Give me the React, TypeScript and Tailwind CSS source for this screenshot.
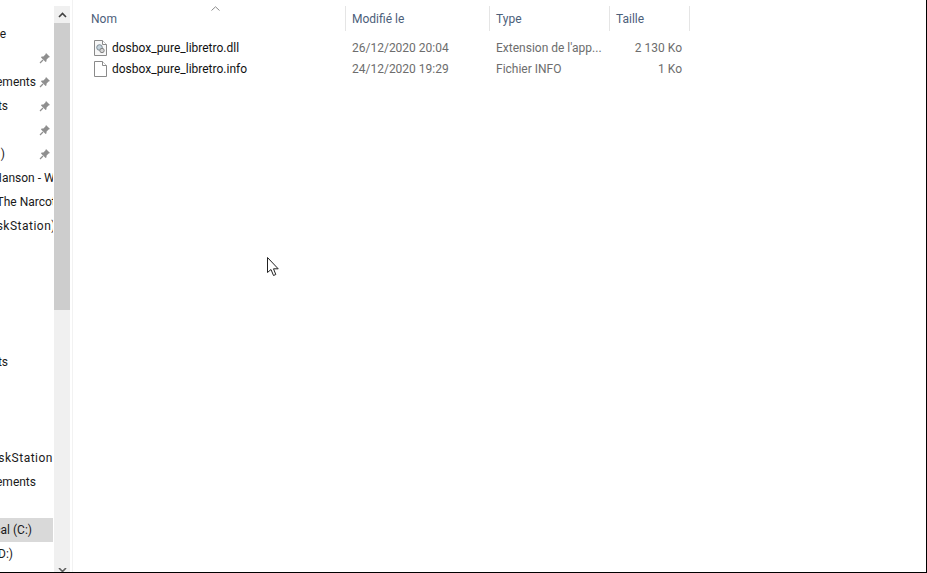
import React from "react";

const font = { fontFamily: 'Roboto,"Noto Sans",sans-serif' };

function Pin() {
  return (
    <svg width="12" height="12" viewBox="0 0 12 12" className="shrink-0">
      <path d="M7 1 L11 5 L9.6 5.6 L7.6 7.6 L7.4 9.6 L6.6 10 L2 5.4 L2.6 4.6 L4.4 4.4 L6.4 2.4 Z" fill="#8f8f8f" />
      <path d="M4 8 L1 11" stroke="#8f8f8f" strokeWidth="1.2" />
    </svg>
  );
}

function NavRow({ text, pin, selected, shift }: { text?: string; pin?: boolean; selected?: boolean; shift?: string }) {
  return (
    <div className={`relative h-6 flex items-center justify-end overflow-hidden whitespace-nowrap text-[12px] text-[#1a1a1a] ${selected ? "bg-[#d9d9d9]" : ""}`}>
      {text ? <span className={`shrink-0 leading-none ${shift ?? ""}`}>{text}</span> : null}
      {pin ? <span className="absolute left-[39px] top-[6px]"><Pin /></span> : null}
    </div>
  );
}

function Row({ icon, name, date, type, size }: { icon: React.ReactNode; name: string; date: string; type: string; size: string }) {
  return (
    <div className="flex h-[21px] items-center pl-[17px]">
      <div className="w-[254px] flex items-center gap-[5px] pl-[3px] text-[#111111]">
        <span className="flex mb-[2px]">{icon}</span>
        <span>{name}</span>
      </div>
      <div className="w-[144px] pl-[7px] text-[#6d6d6d]">{date}</div>
      <div className="w-[120px] pl-[7px] text-[#6d6d6d]">{type}</div>
      <div className="w-[80px] pr-[7px] text-right text-[#6d6d6d]">{size}</div>
    </div>
  );
}

function DllIcon() {
  return (
    <svg width="13" height="16" viewBox="0 0 13 16">
      <path d="M0.5 0.5 H8.5 L12.5 4.5 V15.5 H0.5 Z" fill="#f7f7f7" stroke="#8a8a8a" />
      <path d="M8.5 0.5 V4.5 H12.5" fill="#fff" stroke="#8a8a8a" />
      <circle cx="5.5" cy="7.5" r="2.8" fill="#c5d3dc" stroke="#7d8a94" />
      <circle cx="8" cy="10.5" r="2.2" fill="#d4d4d4" stroke="#828282" />
    </svg>
  );
}

function FileIcon() {
  return (
    <svg width="13" height="16" viewBox="0 0 13 16">
      <path d="M0.5 0.5 H8.5 L12.5 4.5 V15.5 H0.5 Z" fill="#fff" stroke="#8a8a8a" />
      <path d="M8.5 0.5 V4.5 H12.5" fill="#fff" stroke="#8a8a8a" />
    </svg>
  );
}

export default function App() {
  return (
    <div style={font} className="relative w-[927px] h-[573px] overflow-hidden bg-white border-r border-b border-r-black border-b-black flex">
      {/* navigation tree */}
      <div className="w-[53px] shrink-0 pt-[22px]">
        <NavRow text="Accès rapide" shift="mr-[47px]" />
        <NavRow pin />
        <NavRow text="Téléchargements" shift="mr-[17px]" pin />
        <NavRow text="Documents" shift="mr-[45px]" pin />
        <NavRow pin />
        <NavRow text="Images (1)" shift="mr-[48px]" pin />
        <NavRow text="Hanson - Walk" shift="mr-[-17px]" />
        <NavRow text="The Narcotic" shift="mr-[-12px]" />
        <NavRow text="DiskStation)" shift="mr-[-3px] tracking-[0.5px]" />
        <div className="h-[112px]" />
        <NavRow text="Documents" shift="mr-[45px]" />
        <div className="h-[72px]" />
        <NavRow text="DiskStation" shift="mr-[0px] tracking-[0.5px]" />
        <NavRow text="Téléchargements" shift="mr-[17px]" />
        <div className="h-6" />
        <NavRow text="Disque local (C:)" shift="mr-[21px]" selected />
        <NavRow text="Données (D:)" shift="mr-[40px]" />
      </div>

      {/* scrollbar */}
      <div className="w-[16px] ml-[1px] shrink-0 mt-[6px] flex flex-col bg-[#f0f0f0]">
        <div className="h-[17px] flex items-center justify-center shrink-0">
          <svg width="9" height="6" viewBox="0 0 9 6"><path d="M1 5 L4.5 1.5 L8 5" fill="none" stroke="#404040" strokeWidth="1.6" /></svg>
        </div>
        <div className="h-[287px] bg-[#cdcdcd] shrink-0" />
        <div className="flex-1 flex items-end justify-center">
          <svg width="9" height="4" viewBox="0 0 9 4"><path d="M1 0 L4.5 3.5 L8 0" fill="none" stroke="#606060" strokeWidth="1.6" /></svg>
        </div>
      </div>

      <div className="w-[1px] ml-[2px] shrink-0 bg-[#f2f2f2]" />

      {/* file list */}
      <div className="flex-1 min-w-0 pl-[1px]">
        <div className="relative h-[30px] pl-[17px] flex text-[12px]">
          <span className="absolute left-[137px] top-[6px]">
            <svg width="9" height="5" viewBox="0 0 9 5"><path d="M0.5 4.5 L4.5 0.8 L8.5 4.5" fill="none" stroke="#8a8a8a" /></svg>
          </span>
          <div className="w-[254px] pt-[6px] h-[30px] flex items-center mt-[1px] text-[#4c607a]">Nom</div>
          <div className="w-[144px] pl-[6px] mt-[6px] h-[25px] flex items-center border-l border-[#e5e5e5] text-[#4c607a]">Modifié le</div>
          <div className="w-[120px] pl-[6px] mt-[6px] h-[25px] flex items-center border-l border-[#e5e5e5] text-[#4c607a]">Type</div>
          <div className="w-[81px] pl-[6px] mt-[6px] h-[25px] flex items-center border-x border-[#e5e5e5] text-[#4c607a]">Taille</div>
        </div>
        <div className="pt-[8px] text-[12px] leading-[21px]">
          <Row icon={<DllIcon />} name="dosbox_pure_libretro.dll" date="26/12/2020 20:04" type="Extension de l'app..." size="2 130 Ko" />
          <Row icon={<FileIcon />} name="dosbox_pure_libretro.info" date="24/12/2020 19:29" type="Fichier INFO" size="1 Ko" />
        </div>
      </div>

      {/* mouse cursor */}
      <svg width="13" height="20" viewBox="0 0 13 20" className="absolute left-[267px] top-[257px]">
        <path d="M0.5 0.5 V15.5 L4 12.5 L6.5 18.5 L8.8 17.5 L6.5 11.8 H11.2 Z" fill="#fff" stroke="#222" />
      </svg>
    </div>
  );
}
